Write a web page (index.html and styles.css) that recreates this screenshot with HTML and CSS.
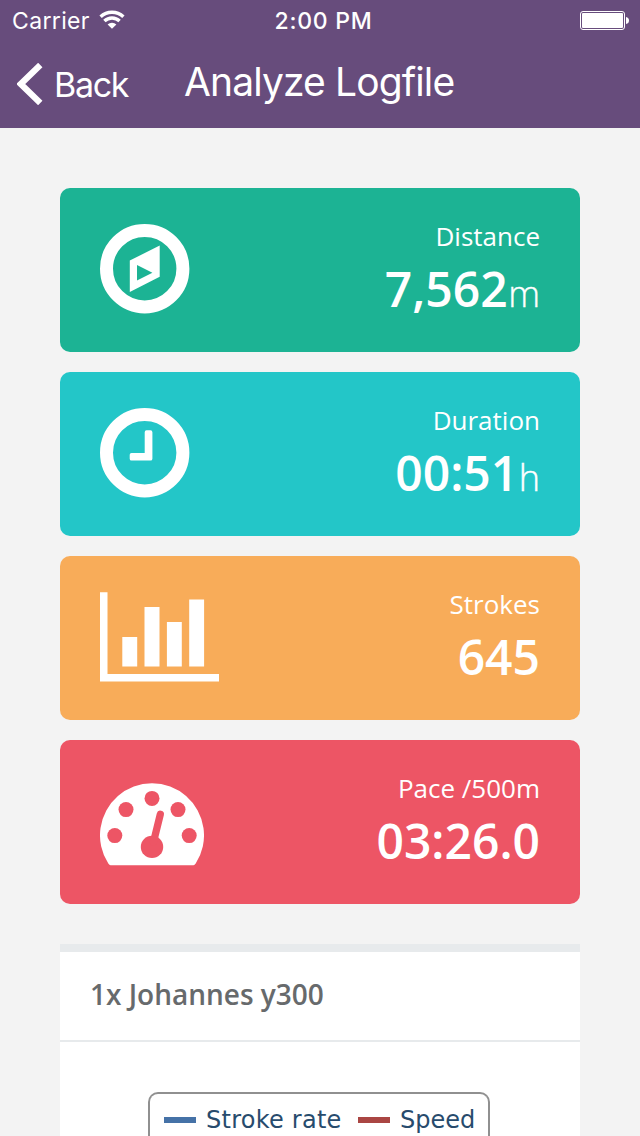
FILE: index.html
```html
<!DOCTYPE html>
<html lang="en">
<head>
<meta charset="utf-8">
<title>Analyze Logfile</title>
<link rel="stylesheet" href="styles.css">
</head>
<body>
<header class="header">
  <div class="status">
    <div class="status-left">
      <span class="carrier">Carrier</span>
      <svg class="wifi" width="26" height="20" viewBox="0 0 26 20" fill="none" stroke="#fff">
        <path d="M1.6 6.8A16.5 16.5 0 0 1 24.4 6.8" stroke-width="3.400"/>
        <path d="M5.4 11A11 11 0 0 1 20.6 11" stroke-width="3.400"/>
        <path d="M13 18.8L8.600 14.5A6.2 6.2 0 0 1 17.400 14.5Z" fill="#fff" stroke="none"/>
      </svg>
    </div>
    <span class="time">2:00 PM</span>
    <svg class="battery" width="50" height="19" viewBox="0 0 50 19">
      <rect x=".5" y=".5" width="44" height="18" rx="2.5" fill="none" stroke="#fff"/>
      <rect x="2" y="2" width="41" height="15" rx="1" fill="#fff"/>
      <path d="M46 6q3 .5 3 3.500t-3 3.500z" fill="#fff"/>
    </svg>
  </div>
  <nav class="nav">
    <a class="back">
      <svg width="26" height="42" viewBox="0 0 26 42"><path d="M23.300 2L3.800 21L23.300 40" fill="none" stroke="#fff" stroke-width="6.200"/></svg>
      <span class="back-label">Back</span>
    </a>
    <h1 class="title">Analyze Logfile</h1>
  </nav>
</header>
<main class="content">
  <section class="card green">
    <svg width="90" height="90" viewBox="0 0 90 90">
      <circle cx="44.700" cy="44.700" r="38.200" fill="none" stroke="#fff" stroke-width="13"/>
      <path fill="#fff" fill-rule="evenodd" d="M29.800 36.500L59.700 21.600V52.800L29.800 68ZM37 41V56.500L52.400 48.700Z"/>
    </svg>
    <div class="info"><span class="label">Distance</span><strong class="value">7,562<small>m</small></strong></div>
  </section>
  <section class="card cyan">
    <svg width="90" height="90" viewBox="0 0 90 90">
      <circle cx="44.700" cy="44.700" r="38.200" fill="none" stroke="#fff" stroke-width="13"/>
      <path fill="#fff" d="M46.500 22.300h4q1.900 0 1.900 1.900v26.500q0 1.900-1.900 1.900h-19q-1.800 0-1.800-1.900v-4q0-1.700 1.800-1.700h13.200v-20.800q0-1.900 1.800-1.900z"/>
    </svg>
    <div class="info"><span class="label">Duration</span><strong class="value">00:51<small>h</small></strong></div>
  </section>
  <section class="card orange">
    <svg width="120" height="90" viewBox="0 0 120 90" fill="#fff">
      <path d="M0 .2h7.500v81.800h111.500v7.500H0z"/>
      <path d="M22.300 45h14.900v29.600h-14.900zM44.500 15h15v59.600h-15zM66.900 30h14.900v44.600h-14.900zM89.200 7.600h14.900v67h-14.900z"/>
    </svg>
    <div class="info"><span class="label">Strokes</span><strong class="value">645</strong></div>
  </section>
  <section class="card red">
    <svg class="gauge" width="104" height="83" viewBox="0 0 104 83">
      <path fill="#fff" d="M10.500 82.300Q9.500 82.300 8.300 80.500A52 52 0 1 1 95.700 80.500Q94.500 82.300 93.500 82.300Z"/>
      <g fill="#ed5565">
        <circle cx="14.800" cy="52.600" r="7.500"/><circle cx="26" cy="26.600" r="7.500"/><circle cx="52" cy="15.400" r="7.500"/><circle cx="78" cy="26.600" r="7.500"/><circle cx="89.200" cy="52.600" r="7.500"/><circle cx="52" cy="63.900" r="11.200"/>
      </g>
      <path d="M53.500 59L60.300 31.300" stroke="#ed5565" stroke-width="7.300" stroke-linecap="round"/>
    </svg>
    <div class="info"><span class="label">Pace /500m</span><strong class="value">03:26.0</strong></div>
  </section>
  <section class="panel">
    <h2 class="panel-title">1x Johannes y300</h2>
    <div class="chart">
      <div class="legend">
        <span class="line blue"></span><span class="name rate">Stroke rate</span>
        <span class="line crimson"></span><span class="name">Speed</span>
      </div>
    </div>
  </section>
</main>
</body>
</html>
```
FILE: styles.css
```css
* { box-sizing: border-box; }
body { margin: 0; height: 1136px; background: #f3f3f3; font-family: "Open Sans", sans-serif; }
svg { display: block; flex: none; }

.header { height: 128px; background: #674c7c; color: #fff; font-family: Inter, sans-serif; }
.status { display: grid; grid-template-columns: 1fr auto 1fr; height: 40px; padding: 0 10px 0 12px; align-items: center; }
.status-left { display: flex; align-items: center; gap: 9px; }
.carrier { width: 78px; margin-top: 2px; font-size: 23px; line-height: 38px; letter-spacing: 0.35px; }
.wifi { margin: -1px 0 0 0; }
.time { font-size: 23px; font-weight: 550; line-height: 38px; letter-spacing: 0.75px; margin-top: 2px; padding-left: 5px; }
.battery { justify-self: end; }
.nav { display: flex; height: 88px; }
.back { display: flex; width: 184px; padding: 23px 0 0 17px; gap: 11px; }
.back-label { font-size: 34px; font-weight: 370; line-height: 44px; letter-spacing: -1.3px; }
.title { margin: 0; padding-top: 18px; font-size: 39px; font-weight: 370; line-height: 48px; letter-spacing: -0.88px; white-space: nowrap; }

.content { display: flex; flex-direction: column; gap: 20px; height: 1008px; padding: 60px 60px 0; }
.card { display: flex; flex: none; justify-content: space-between; height: 164px; padding: 36px 40px 0; border-radius: 10px; color: #fff; }
.green { background: #1cb394; }
.cyan { background: #23c6c8; }
.orange { background: #f8ac59; }
.red { background: #ed5565; }
.gauge { margin-top: 7px; }
.info { display: flex; flex-direction: column; align-items: flex-end; margin-top: -7px; }
.label { font-size: 26px; font-weight: 400; line-height: 38px; }
.value { margin-top: 1px; font-size: 48px; font-weight: 600; line-height: 66px; white-space: nowrap; }
.value small { margin-left: 0.5px; font-size: 36px; font-weight: 300; -webkit-text-stroke: 0.4px #fff; }

.panel { flex: 1; min-height: 0; margin-top: 20px; overflow: hidden; background: #fff; border-top: 8px solid #e7eaec; }
.panel-title { margin: 0; height: 90px; padding: 22px 30px 0; border-bottom: 2px solid #e7eaec; font-size: 28px; font-weight: 600; line-height: 40px; color: #676a6c; }
.chart { height: 94px; padding: 50px 0 0 88px; overflow: hidden; }
.legend { display: flex; align-items: center; width: 342px; height: 44px; padding-left: 14px; border: 2px solid #909090; border-bottom: 0; border-radius: 10px 10px 0 0; font-family: "DejaVu Sans", sans-serif; font-size: 24px; color: #274b6d; }
.line { width: 32px; height: 6px; margin: 10px 10px 0 0; }
.blue { background: #4572a7; }
.crimson { background: #aa4643; }
.name { margin-top: 10px; line-height: 30px; white-space: nowrap; }
.rate { width: 152px; letter-spacing: 0.25px; }
```
